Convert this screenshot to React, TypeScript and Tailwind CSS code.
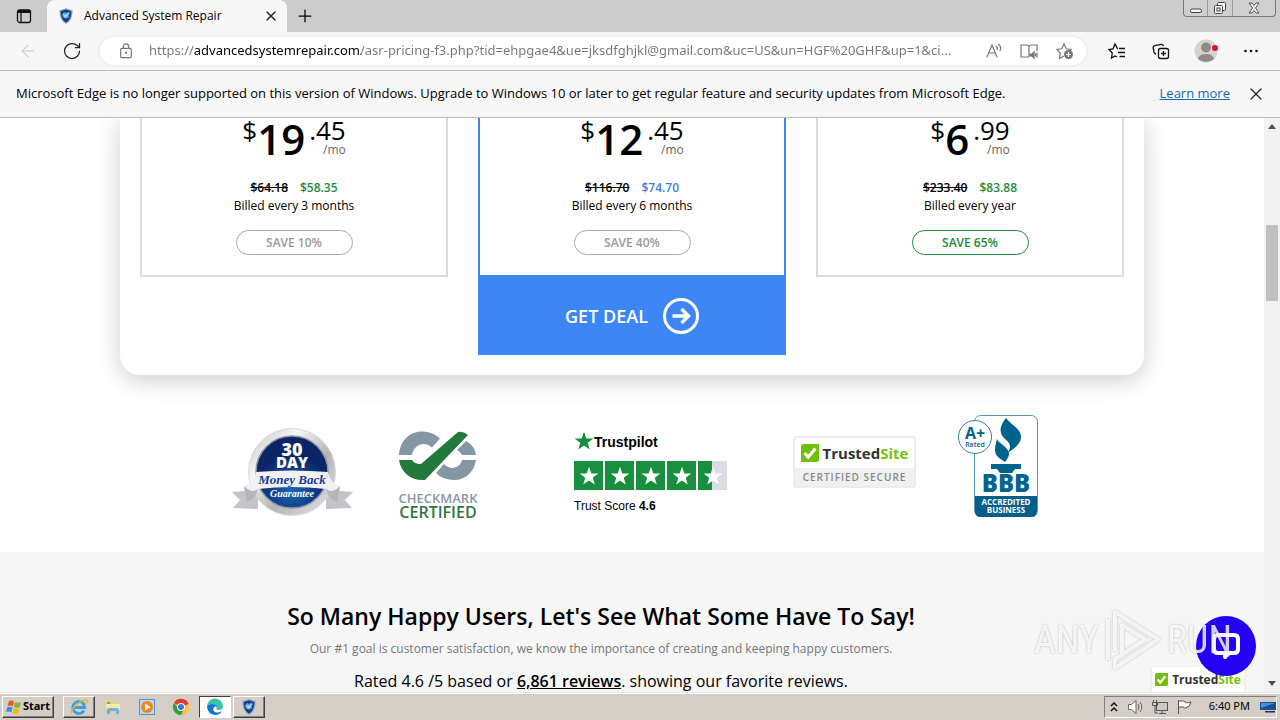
import type { ReactNode } from "react";
import { ArrowLeft, Plus, RotateCw, X } from "lucide-react";

const PLANS = [
  {
    dollars: "19",
    cents: ".45",
    was: "$64.18",
    now: "$58.35",
    term: "Billed every 3 months",
    save: "SAVE 10%",
    frame: "border-[#dcdcdc]",
    accent: "text-[#1f8a3d]",
    pill: "border-[#aaaaaa] text-[#999999]",
    featured: false,
  },
  {
    dollars: "12",
    cents: ".45",
    was: "$116.70",
    now: "$74.70",
    term: "Billed every 6 months",
    save: "SAVE 40%",
    frame: "border-[#3d86f6]",
    accent: "text-[#3f7fe0]",
    pill: "border-[#aaaaaa] text-[#999999]",
    featured: true,
  },
  {
    dollars: "6",
    cents: ".99",
    was: "$233.40",
    now: "$83.88",
    term: "Billed every year",
    save: "SAVE 65%",
    frame: "border-[#dcdcdc]",
    accent: "text-[#1f8a3d]",
    pill: "border-[#1f8a3d] text-[#1f8a3d]",
    featured: false,
  },
];

const STAR = "M12 1l2.8 7.9 8.4.2-6.7 5.1 2.4 8L12 17.5l-6.9 4.7 2.4-8L.8 9.1l8.4-.2z";

/* ── Browser chrome ──────────────────────────────────────── */

function ShieldIcon({ className }: { className?: string }) {
  return (
    <svg viewBox="0 0 16 18" className={className} aria-hidden="true">
      <path d="M8 0l7.5 2.5C15.500 9 14 15 8 18 2 15 .5 9 .5 2.500z" fill="#8fa9c8" />
      <path d="M8 1.500l6 2C14 9 12.500 14 8 16.500 3.500 14 2 9 2 3.500z" fill="#163e7c" />
      <path d="M3.500 7l2.500-2.500 2 1 3-1.500 1.500 2-1.500 1.500.5 3-3.500 1.500-3.500-1.500z" fill="#5fa3dc" />
      <path d="M5 7.500q3 2.500 6-2M6 10q2 1 4-2" fill="none" stroke="#dceaf8" strokeWidth="1.100" />
    </svg>
  );
}

function TabStrip() {
  return (
    <header className="flex h-8 shrink-0 bg-[#cccccc]">
      <div className="flex w-[47px] items-center justify-center">
        <button aria-label="Tab actions" className="flex">
          <svg viewBox="0 0 16 16" className="size-4" fill="none" stroke="#111">
            <rect x="1.500" y="2" width="13" height="12.500" rx="2" strokeWidth="1.300" />
            <path d="M1.500 3.500h13" strokeWidth="3" />
            <path d="M5 4v10" strokeWidth="1.300" />
          </svg>
        </button>
      </div>
      <div className="flex w-60 items-center rounded-t-lg bg-[#f7f7f7] pl-3 pr-2">
        <ShieldIcon className="h-4 w-3.5" />
        <span className="ml-[11px] flex-1 text-xs">Advanced System Repair</span>
        <button aria-label="Close tab" className="flex">
          <X className="size-4 text-[#222]" strokeWidth={2} />
        </button>
      </div>
      <button aria-label="New tab" className="ml-2 flex items-center">
        <Plus className="size-5 text-black" strokeWidth={1.5} />
      </button>
      <div className="ml-auto mr-1 flex h-[17px] rounded-b-[4px] border border-t-0 border-[#777777] bg-[#cfcfcf]">
        <button aria-label="Minimize" className="flex w-6 items-center justify-center border-r border-[#999999]">
          <svg viewBox="0 0 12 12" className="size-3" fill="#f5f5f5" stroke="#444">
            <rect x=".5" y="7" width="11" height="3.500" rx="1.500" />
          </svg>
        </button>
        <button aria-label="Restore" className="flex w-[25px] items-center justify-center border-r border-[#999999]">
          <svg viewBox="0 0 14 14" className="size-3.5" fill="#f5f5f5" stroke="#444">
            <rect x="4.500" y="1.500" width="8" height="8" rx="1" />
            <rect x="1.500" y="4.500" width="8" height="8" rx="1" />
            <rect x="4" y="7" width="3" height="3" />
          </svg>
        </button>
        <button aria-label="Close" className="flex w-[42px] items-center justify-center">
          <svg viewBox="0 0 12 12" className="size-3" fill="#f5f5f5" stroke="#555">
            <path d="M1 1h3l2 2.500L8 1h3L7.500 6 11 11H8L6 8.500 4 11H1l3.500-5z" />
          </svg>
        </button>
      </div>
    </header>
  );
}

function Toolbar() {
  return (
    <div className="flex h-[39px] shrink-0 items-center border-b border-[#b9b9b9] bg-[#f7f7f7] pl-[18px] pr-5">
      <button aria-label="Back" className="flex">
        <ArrowLeft className="size-5 text-[#c9c9c9]" strokeWidth={1.25} />
      </button>
      <button aria-label="Refresh" className="ml-6 flex">
        <RotateCw className="size-5 text-[#222]" strokeWidth={1.5} />
      </button>
      <div className="ml-4 flex h-8 flex-1 items-center rounded-full border-2 border-[#f0f0f0] bg-white pl-[18px] pr-3 text-[#767676]">
        <svg viewBox="0 0 16 18" className="h-4 w-4" fill="none" stroke="currentColor" strokeWidth="1.300">
          <rect x="2" y="6" width="12" height="10.500" rx="1.500" />
          <path d="M5 6V4a3 3 0 016 0v2" />
          <circle cx="8" cy="11" r=".6" fill="currentColor" />
        </svg>
        <input
          aria-label="Address and search bar"
          className="ml-[15px] min-w-0 flex-1 bg-[linear-gradient(90deg,#767676_45px,#000_45px,#000_212px,#767676_212px)] bg-clip-text font-['Noto_Sans',sans-serif] text-[13px] text-transparent outline-none"
          defaultValue="https://advancedsystemrepair.com/asr-pricing-f3.php?tid=ehpgae4&ue=jksdfghjkl@gmail.com&uc=US&un=HGF%20GHF&up=1&ci..."
        />
        <button aria-label="Read aloud" className="ml-1 flex">
          <svg viewBox="0 0 18 18" className="size-[18px]" fill="none" stroke="currentColor" strokeWidth="1.200">
            <path d="M2 15L7 3l5 12M3.800 11h6.400M11 4q2 1.500 1.200 4M13 2q4 2.500 2 7" />
          </svg>
        </button>
        <button aria-label="Immersive reader" className="ml-[17px] flex">
          <svg viewBox="0 0 18 18" className="size-[18px]" fill="none" stroke="currentColor" strokeWidth="1.200">
            <path d="M9 15H1V3h6q2 0 2 2v10M9 5q0-2 2-2h6v6" />
            <path d="M10 12h2l2-2v6l-2-2h-2z" fill="currentColor" />
            <path d="M15.500 11.500v3M17 10.500v5" />
          </svg>
        </button>
        <button aria-label="Add to favorites" className="ml-[18px] flex">
          <svg viewBox="0 0 18 18" className="size-[18px]" fill="none" stroke="currentColor" strokeWidth="1.200">
            <path d="M8 14l-4.500 2.500.8-5.200L1 7.500l4.800-.7L8 2l2.200 4.800 5 .7-1.500 1.500" />
            <circle cx="12.500" cy="12.500" r="4.500" fill="currentColor" stroke="none" />
            <path d="M12.500 10v5M10 12.500h5" stroke="#fff" />
          </svg>
        </button>
      </div>
      <button aria-label="Favorites" className="ml-5 flex">
        <svg viewBox="0 0 18 18" className="size-[18px]" fill="none" stroke="#111" strokeWidth="1.300">
          <path d="M10 6.500h-.5L7 2 5 6.800l-4 .7 3.300 3.500-.8 5L7 14l2 1M11 6.500h6M10 10.500h7M11.500 14.500H17" />
        </svg>
      </button>
      <button aria-label="Collections" className="ml-[26px] flex">
        <svg viewBox="0 0 18 18" className="size-[18px]" fill="none" stroke="#111" strokeWidth="1.300">
          <rect x="6.500" y="6.500" width="10" height="10" rx="2" />
          <path d="M11.500 9v5M9 11.500h5M4 12q-1.500-.2-2-2l-.8-4q-.2-2 1.800-2.400l6-1.200q2-.2 2.500 1.600" />
        </svg>
      </button>
      <button aria-label="Profile" className="ml-6 flex">
        <svg viewBox="0 0 24 24" className="size-6">
          <circle cx="12" cy="12" r="11.500" fill="#d5d3d0" />
          <circle cx="12" cy="8.500" r="5" fill="#918b88" />
          <path d="M4 20q1-5 8-5t8 5q-8 6-16 0z" fill="#918b88" />
          <circle cx="21" cy="9" r="3" fill="#e8111e" />
        </svg>
      </button>
      <button aria-label="Settings and more" className="ml-6 flex">
        <svg viewBox="0 0 18 18" className="size-[18px]" fill="#111">
          <circle cx="3.500" cy="9" r="1.300" />
          <circle cx="9" cy="9" r="1.300" />
          <circle cx="14.500" cy="9" r="1.300" />
        </svg>
      </button>
    </div>
  );
}

function SupportNotice() {
  return (
    <div className="flex h-[47px] shrink-0 items-center border-b border-[#b9b9b9] bg-[#f7f7f7] pl-4 pr-3.5 text-[13px]">
      <p className="flex-1 whitespace-nowrap">
        Microsoft Edge is no longer supported on this version of Windows. Upgrade to Windows 10 or later to get regular
        feature and security updates from Microsoft Edge.
      </p>
      <a href="#learn-more" className="text-[#1668ad] underline">
        Learn more
      </a>
      <button aria-label="Dismiss" className="ml-4 flex">
        <X className="size-5 text-[#222]" strokeWidth={1.5} />
      </button>
    </div>
  );
}

/* ── Pricing ─────────────────────────────────────────────── */

function PlanCard({ plan }: { plan: (typeof PLANS)[number] }) {
  return (
    <div className="flex-1">
      <div className={`flex h-[159px] flex-col items-center border-2 border-t-0 ${plan.frame}`}>
        <div className="flex h-[61px] shrink-0 items-start">
          <span className="text-[26px] leading-6">$</span>
          <span className="text-[42px] font-semibold leading-[42px]">{plan.dollars}</span>
          <span className="ml-1 flex flex-col items-end">
            <span className="text-[26px] leading-6">{plan.cents}</span>
            <span className="text-xs leading-4 text-[#666666]">/mo</span>
          </span>
        </div>
        <p className="flex gap-3 text-xs font-semibold leading-[18px]">
          <s>{plan.was}</s>
          <span className={plan.accent}>{plan.now}</span>
        </p>
        <p className="text-xs leading-[18px]">{plan.term}</p>
        <p className={`mt-[15px] w-[117px] rounded-full border text-center text-xs font-semibold leading-[23px] ${plan.pill}`}>
          {plan.save}
        </p>
      </div>
      {plan.featured && (
        <button className="flex h-[78px] w-full items-center justify-center gap-[15px] bg-[#3d86f6] text-lg font-semibold text-white">
          GET DEAL
          <svg viewBox="0 0 36 36" className="size-9" fill="none" stroke="#fff" strokeWidth="3">
            <circle cx="18" cy="18" r="16.500" />
            <path d="M9.500 18h15M18.500 11l7 7-7 7" strokeWidth="3.500" />
          </svg>
        </button>
      )}
    </div>
  );
}

/* ── Trust badges ────────────────────────────────────────── */

function MoneyBackBadge() {
  return (
    <svg viewBox="0 0 124 92" className="h-[92px] w-[124px]" role="img" aria-label="30 day money back guarantee">
      <defs>
        <linearGradient id="silver" x1="0" x2="1" y2="1">
          <stop offset="0" stopColor="#bdbdbd" />
          <stop offset=".3" stopColor="#f7f7f7" />
          <stop offset=".6" stopColor="#b4b4b8" />
          <stop offset="1" stopColor="#e9e9ee" />
        </linearGradient>
        <radialGradient id="navy" cx=".5" cy=".75">
          <stop offset="0" stopColor="#1b63b4" />
          <stop offset="1" stopColor="#0b2566" />
        </radialGradient>
      </defs>
      <path d="M28 64L2 66l8 8-7 8 25 1zM96 64l27 2-8 8 7 8-26 1z" fill="#c4c4c8" />
      <circle cx="62" cy="46" r="43.500" fill="url(#silver)" stroke="#d9d9dc" />
      <circle cx="62" cy="46" r="36" fill="url(#navy)" stroke="#8d93a5" strokeWidth="1.500" />
      <path d="M14 60q10-3 12-14 36-3 72 0 2 11 12 14l-2 16q-9 0-12-13-34-4-68 0-3 13-12 13z" fill="#f1f1f3" />
      <path d="M14 60q7 8 14 3-3 13-12 13zM110 60q-7 8-14 3 3 13 12 13z" fill="#b5b5ba" />
      <g textAnchor="middle" fill="#fff" fontFamily="Open Sans, sans-serif" fontWeight="800">
        <text x="62" y="30" fontSize="18">30</text>
        <text x="62" y="42" fontSize="15">DAY</text>
      </g>
      <g textAnchor="middle" fontFamily="Liberation Serif, serif" fontStyle="italic" fontWeight="700">
        <text x="62" y="58" fontSize="13" fill="#143f91">Money Back</text>
        <text x="62" y="71" fontSize="10" fill="#fff">Guarantee</text>
      </g>
    </svg>
  );
}

function CheckmarkBadge() {
  return (
    <div className="flex w-20 flex-col items-center">
      <svg viewBox="0 0 80 52" className="h-[52px] w-20" aria-hidden="true">
        <path d="M1 25C2 10 12 1.500 24 1.500q11 0 18 7l-8 9c-8-7-18-3-20 7.500z" fill="#8497a5" />
        <path d="M68 11q9 5 10 14H64q-1-3-5-5zM78 30C76 42 68 50 56 50q-11 0-18-7l8-9c7 7 16 4 18-4z" fill="#8497a5" />
        <path d="M1 30h13q2 4 9 4L60 2q5-1 10 3L27 50C12 51 3 42 1 30z" fill="#23793b" />
      </svg>
      <span className="mt-2 text-[13px] font-semibold leading-4 text-[#8b98a3]">CHECKMARK</span>
      <span className="text-base font-semibold leading-3 text-[#2f7444]">CERTIFIED</span>
    </div>
  );
}

function TrustpilotBadge() {
  return (
    <div className="flex w-[155px] flex-col font-['Liberation_Sans',sans-serif]">
      <div className="flex h-5 items-center text-[14px] font-bold">
        <svg viewBox="0 0 24 24" className="size-5" fill="#178f3e">
          <path d={STAR} />
        </svg>
        <span className="mt-0.5">Trustpilot</span>
      </div>
      <div className="mt-2.5 flex gap-0.5" role="img" aria-label="4.6 out of 5 stars">
        {[1, 2, 3, 4, 5].map((n) => (
          <span
            key={n}
            className={
              n === 5
                ? "flex size-[29px] items-center justify-center bg-[linear-gradient(90deg,#178f3e_50%,#dcdce6_50%)]"
                : "flex size-[29px] items-center justify-center bg-[#178f3e]"
            }
          >
            <svg viewBox="0 0 24 24" className="size-5" fill="#fff">
              <path d={STAR} />
            </svg>
          </span>
        ))}
      </div>
      <p className="mt-2 text-xs leading-4">
        Trust Score <b>4.6</b>
      </p>
    </div>
  );
}

function TrustedSiteName({ compact = false }: { compact?: boolean }) {
  return (
    <span className="flex items-center justify-center gap-1">
      <svg viewBox="0 0 20 20" className={compact ? "size-[13px]" : "size-[18px]"}>
        <path d="M3 0h17v17a3 3 0 01-3 3H0V3a3 3 0 013-3z" fill="#72bf0b" />
        <path d="M4 10l4 4.500L16 5" fill="none" stroke="#fff" strokeWidth="3.500" />
      </svg>
      <span className={compact ? "text-xs font-bold leading-4 text-[#333]" : "text-[15px] font-bold leading-5 text-[#333]"}>
        Trusted<span className="text-[#76c010]">Site</span>
      </span>
    </span>
  );
}

function TrustedSiteBadge() {
  return (
    <div className="w-[123px] rounded-sm border-2 border-[#ececec] bg-white">
      <div className="flex h-[30px] items-center justify-center">
        <TrustedSiteName />
      </div>
      <p className="bg-[#f0f0f0] text-center text-[10px] font-semibold leading-[18px] tracking-widest text-[#888]">
        CERTIFIED SECURE
      </p>
    </div>
  );
}

function BbbBadge() {
  return (
    <svg viewBox="0 0 80 103" className="h-[103px] w-20" role="img" aria-label="BBB accredited business, A+ rated">
      <rect x="16.500" y=".5" width="63" height="101" rx="6" fill="#fff" stroke="#5d93ae" />
      <path d="M17 81h62v15q0 6-6 6H23q-6 0-6-6z" fill="#005f8a" />
      <path
        d="M48 3c5 7 16 11 15 20-1 7-8 11-13 15 3-7 3-9-3-14-7-6-5-14 1-21zM39 24c2 5 12 8 12 15 0 3-2 5-4 8-4-3-10-5-10-12 0-4 1-7 2-11z"
        fill="#00638e"
      />
      <path d="M33 49h30v5h-6l-3 4H42l-3-4h-6z" fill="#00638e" />
      <circle cx="17" cy="22" r="16.500" fill="#fff" stroke="#3b7d9f" />
      <g textAnchor="middle" fontFamily="Open Sans, sans-serif" fontWeight="800" fill="#00638e">
        <text x="17" y="24" fontSize="16" fontWeight="700">A+</text>
        <text x="17" y="32" fontSize="7" fontWeight="600">Rated</text>
        <text x="48" y="77" fontSize="24">BBB</text>
        <g fill="#fff" fontWeight="700">
          <text x="48" y="90" fontSize="8">ACCREDITED</text>
          <text x="48" y="98" fontSize="8">BUSINESS</text>
        </g>
      </g>
    </svg>
  );
}

/* ── Overlays ────────────────────────────────────────────── */

function CornerWidgets() {
  return (
    <>
      <div className="absolute bottom-0 right-5 flex h-[25px] w-[92px] items-center justify-center bg-white shadow">
        <TrustedSiteName compact />
      </div>
      <button
        aria-label="Open chat"
        className="absolute bottom-4 right-2 flex size-[60px] items-center justify-center rounded-full bg-[#2400f5]"
      >
        <svg viewBox="0 0 30 30" className="size-[30px]" fill="none" stroke="#fff" strokeWidth="4" strokeLinejoin="round">
          <path d="M7 4h16q4 0 4 4v10q0 4-4 4h-5l-4 4v-4H7q-4 0-4-4V8q0-4 4-4z" />
        </svg>
      </button>
      <div className="pointer-events-none absolute bottom-5 right-8 flex items-center gap-1.5 font-['Roboto_Condensed','Liberation_Sans_Narrow','Liberation_Sans',sans-serif] text-[38px] leading-[64px] text-white/80 drop-shadow-[0_0_1px_rgba(0,0,0,0.3)]">
        <span>ANY</span>
        <svg viewBox="0 0 56 64" className="h-16 w-14" fill="none" stroke="currentColor" strokeWidth="4" strokeLinejoin="round">
          <path d="M3 52V11M10 43V4l43 27.500L10 60V51L40 31.500 17 17v31" />
        </svg>
        <span>RUN</span>
      </div>
    </>
  );
}

/* ── Taskbar ─────────────────────────────────────────────── */

function TaskButton({ label, children, look }: { label: string; children: ReactNode; look: string }) {
  return (
    <button aria-label={label} className={`flex h-[22px] w-8 items-center justify-center ${look}`}>
      {children}
    </button>
  );
}

const RAISED = "border border-b-[#404040] border-l-white border-r-[#404040] border-t-white shadow-[inset_-1px_-1px_0_#808080]";

function Taskbar() {
  return (
    <footer className="flex h-7 shrink-0 items-center border-t border-[#e8e6e0] bg-[#d4cec7] pl-0.5 pr-[3px] shadow-[inset_0_1px_0_#fff]">
      <button className={`flex h-[22px] w-[52px] items-center justify-center gap-px font-['Noto_Sans',sans-serif] text-[11px] font-bold ${RAISED}`}>
        <svg viewBox="0 0 16 16" className="size-4" aria-hidden="true">
          <path d="M3 2q3-1 5 .5L6.800 7.500Q4.500 6 1.500 7z" fill="#ee5a24" />
          <path d="M9 3q3 1.500 6 .3L13.500 8.500q-3 1-5.500-.5z" fill="#7cb83a" />
          <path d="M1.200 8.200q3-1 5.300.5L5.200 13.500q-2.500-1.500-5.200-.5z" fill="#3d8ee0" />
          <path d="M7.800 9.200q3 1.500 5.500.5L12 14.500q-3 1-5.500-.5z" fill="#f5b800" />
        </svg>
        Start
      </button>
      <div className="ml-[9px] flex items-center gap-0.5">
        <TaskButton label="Internet Explorer" look={RAISED}>
          <svg viewBox="0 0 18 18" className="size-[18px]" fill="none">
            <path d="M14 12.500A6 6 0 119 3.500q5 0 5.500 6H4" stroke="#3aa0e0" strokeWidth="2.800" />
            <path d="M2 15.500Q-.5 13 7 6.500T17 2q1 1-1 4" stroke="#f0b323" strokeWidth="1.300" />
          </svg>
        </TaskButton>
        <TaskButton label="Windows Explorer" look="border border-transparent">
          <svg viewBox="0 0 18 18" className="size-[18px]">
            <path d="M2 3h5l1 2h8v9H2z" fill="#ecd070" />
            <path d="M3 4h3v2H3z" fill="#69b04e" />
            <path d="M2 6h14v6H2z" fill="#f9eaa8" />
            <path d="M3 16v-4q0-2 2-2h8q2 0 2 2v4h-3v-3H6v3z" fill="#6db3dc" />
          </svg>
        </TaskButton>
        <TaskButton label="Media Player" look="border border-transparent">
          <svg viewBox="0 0 18 18" className="size-[18px]">
            <rect x="1.500" y="1.500" width="15" height="15" fill="#b6d8f3" stroke="#5a93c6" />
            <circle cx="9" cy="9" r="6" fill="#f28718" />
            <path d="M7 5.500v7L12.500 9z" fill="#fff" />
          </svg>
        </TaskButton>
        <TaskButton label="Chrome" look="border border-transparent">
          <svg viewBox="0 0 18 18" className="size-[18px]">
            <circle cx="9" cy="9" r="8" fill="#fbc02d" />
            <path d="M9 9l7.500-3A8 8 0 002 5z" fill="#e33b2e" />
            <path d="M2 5a8 8 0 007 12l3-6.500L6 10z" fill="#2f9e4b" />
            <circle cx="9" cy="9" r="4" fill="#fff" />
            <circle cx="9" cy="9" r="3" fill="#3b78e7" />
          </svg>
        </TaskButton>
        <TaskButton label="Edge" look="border border-b-white border-l-[#404040] border-r-white border-t-[#404040] bg-white">
          <svg viewBox="0 0 18 18" className="size-[18px]">
            <path d="M1 9a8 8 0 0116-1q0 4-4 4-3 0-2.500-2Q11 6 7 6 2 6 1 9z" fill="#38c5a4" />
            <path d="M1 9q1-3 5-3 5 0 5 3-1-1-3 0-2 3 1 5 3 1.500 7-1-2 4-7 4-7-.5-8-8z" fill="#1474cf" />
          </svg>
        </TaskButton>
        <TaskButton label="Advanced System Repair" look={RAISED}>
          <ShieldIcon className="h-4 w-4" />
        </TaskButton>
      </div>
      <div className="ml-auto flex h-[22px] items-center border border-b-white border-l-[#808080] border-r-white border-t-[#808080] pl-1 font-['Noto_Sans',sans-serif] text-[11px]">
        <svg viewBox="0 0 10 12" className="h-3 w-2.5" fill="none" stroke="#111" strokeWidth="1.500">
          <path d="M2 5l3-3 3 3M2 10l3-3 3 3" />
        </svg>
        <svg viewBox="0 0 18 18" className="ml-2 size-[18px]" fill="#fff" stroke="#666">
          <path d="M1.500 6.500h3L9 2.500v13l-4.500-4h-3z" />
          <path d="M11 6q2 3 0 6M13 4q3.500 5 0 10" fill="none" />
        </svg>
        <svg viewBox="0 0 18 18" className="ml-1.5 size-[18px]" fill="#eee" stroke="#555">
          <rect x="5.500" y="4.500" width="11" height="8" fill="#c9c9c9" />
          <path d="M8 15.500h7M11 13v2" />
          <path d="M1.500 4.500h5v3h-5zM2.500 2v2.500M5.500 2v2.500M4 7.500V15h3" fill="none" />
        </svg>
        <svg viewBox="0 0 18 18" className="ml-1.5 size-[18px]" fill="#fff" stroke="#555">
          <path d="M3.500 2v14M3.500 3H9q2 3 7 1-1 5-5 6-2 0-3-1H3.500z" />
        </svg>
        <time className="ml-4">6:40 PM</time>
        <svg viewBox="0 0 16 16" className="ml-2.5 size-4">
          <path d="M0 3h16v8H0z" fill="#1b4f9c" />
          <path d="M1 4h14L1 9z" fill="#4e8fd8" />
          <path d="M5 12h10v1.500H5z" fill="#333" />
        </svg>
      </div>
    </footer>
  );
}

export default function App() {
  return (
    <div className="flex h-screen flex-col overflow-hidden bg-white font-['Open_Sans','Noto_Sans',sans-serif] text-black">
      <TabStrip />
      <Toolbar />
      <SupportNotice />

      <div className="flex min-h-0 flex-1">
        <main className="relative flex min-w-0 flex-1 flex-col overflow-hidden">
          <section className="mx-auto flex w-full max-w-[1024px] shrink-0 items-start gap-[30px] rounded-b-[20px] bg-white px-5 pb-5 shadow-[0_5px_25px_rgba(0,0,0,0.2)]">
            {PLANS.map((plan) => (
              <PlanCard key={plan.term} plan={plan} />
            ))}
          </section>

          <section className="flex shrink-0 items-end justify-center pb-[34px] pl-1 pt-10">
            <MoneyBackBadge />
            <div className="ml-11">
              <CheckmarkBadge />
            </div>
            <div className="mb-1 ml-24">
              <TrustpilotBadge />
            </div>
            <div className="mb-[30px] ml-16">
              <TrustedSiteBadge />
            </div>
            <div className="ml-[42px]">
              <BbbBadge />
            </div>
          </section>

          <section className="flex flex-1 flex-col items-center whitespace-nowrap bg-[#f6f6f6] pr-[62px] pt-12">
            <h2 className="text-[23px] font-semibold leading-8">So Many Happy Users, Let's See What Some Have To Say!</h2>
            <p className="mt-[7px] text-xs leading-5 text-[#777]">
              Our #1 goal is customer satisfaction, we know the importance of creating and keeping happy customers.
            </p>
            <p className="mt-2.5 text-base leading-6">
              Rated 4.6 /5 based or{" "}
              <a href="#reviews" className="font-semibold underline">
                6,861 reviews
              </a>
              . showing our favorite reviews.
            </p>
          </section>
          <CornerWidgets />
        </main>

        {/* Scroll track */}
        <div className="flex w-4 shrink-0 flex-col items-center justify-between bg-[#f1f1f1] py-1.5">
          <svg viewBox="0 0 8 5" className="h-[5px] w-2" fill="#505050">
            <path d="M0 5l4-5 4 5z" />
          </svg>
          <div className="mb-[380px] mt-auto h-[76px] w-3 bg-[#c1c1c1]" />
          <svg viewBox="0 0 8 5" className="h-[5px] w-2" fill="#505050">
            <path d="M0 0l4 5 4-5z" />
          </svg>
        </div>
      </div>

      <Taskbar />
    </div>
  );
}
